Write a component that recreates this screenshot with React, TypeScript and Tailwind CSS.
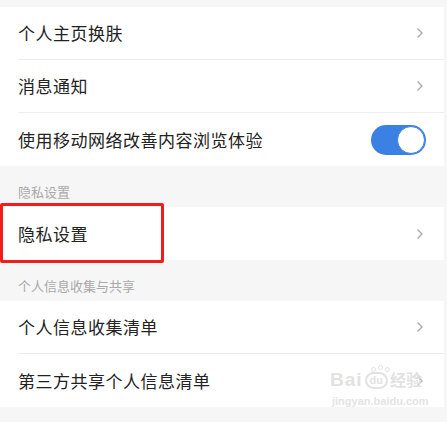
import React, { useState } from 'react';

const font = { fontFamily: '"Noto Sans CJK SC", "Noto Sans", sans-serif' };

function Chevron() {
  return (
    <svg width="8" height="12" viewBox="0 0 8 12" className="shrink-0">
      <path d="M1.5 1.5 L6 6 L1.5 10.5" fill="none" stroke="#a8a8a8" strokeWidth="1.3" />
    </svg>
  );
}

function Row({ label, divider = true, right }: { label: string; divider?: boolean; right?: React.ReactNode }) {
  return (
    <div className="pl-[18px]">
      <div className={`flex items-center justify-between h-[53px] pr-[20px] ${divider ? 'border-b border-[#eeeeee]' : ''}`}>
        <span className="text-[17px] text-[#222222] tracking-[0.5px]">{label}</span>
        {right ?? <Chevron />}
      </div>
    </div>
  );
}

function Toggle() {
  const [on, setOn] = useState(true);
  return (
    <button
      onClick={() => setOn(!on)}
      className={`relative w-[55px] h-[30px] rounded-full mr-[-2px] ${on ? 'bg-[#3b80e3]' : 'bg-[#dddddd]'}`}
    >
      <span
        className={`absolute top-[1px] w-[28px] h-[28px] rounded-full bg-white border border-[#3b80e3] ${on ? 'right-[1px]' : 'left-[1px]'}`}
      />
    </button>
  );
}

function SectionHeader({ title }: { title: string }) {
  return (
    <div className="h-[41px] pl-[18px] flex items-end pb-[6px]">
      <span className="text-[13px] text-[#a9a9a9]">{title}</span>
    </div>
  );
}

export default function App() {
  return (
    <div className="w-[447px] h-[422px] bg-[#f6f6f6] pt-[7px] pr-[3px] relative overflow-hidden" style={font}>
      <div className="bg-white">
        <Row label="个人主页换肤" />
        <Row label="消息通知" />
        <Row label="使用移动网络改善内容浏览体验" divider={false} right={<Toggle />} />
      </div>

      <SectionHeader title="隐私设置" />
      <div className="bg-white">
        <Row label="隐私设置" divider={false} />
      </div>

      <SectionHeader title="个人信息收集与共享" />
      <div className="bg-white">
        <Row label="个人信息收集清单" />
        <Row label="第三方共享个人信息清单" divider={false} />
      </div>

      {/* annotation box */}
      <div className="absolute left-0 top-[203px] w-[164px] h-[60px] border-[3px] border-[#f21c1c] rounded-[2px]" />

      {/* watermark */}
      <div className="absolute left-[330px] top-[370px] flex flex-col items-start pointer-events-none">
        <div className="flex items-end gap-[2px] text-[#e2e2e2] font-bold leading-none" style={{ fontFamily: '"Liberation Sans", "Noto Sans CJK SC", sans-serif' }}>
          <span className="text-[19px] tracking-[1px]">Bai</span>
          <span className="relative text-[11px] px-[3px] py-[1px] rounded-full border-2 border-[#e2e2e2]">
            du
            <span className="absolute left-[4px] top-[-7px] w-[5px] h-[5px] rounded-full border border-[#e2e2e2]" />
            <span className="absolute left-[11px] top-[-9px] w-[5px] h-[5px] rounded-full border border-[#e2e2e2]" />
            <span className="absolute left-[18px] top-[-7px] w-[5px] h-[5px] rounded-full border border-[#e2e2e2]" />
          </span>
          <span className="text-[16px]">经验</span>
        </div>
        <span className="text-[11px] text-[#e4e4e4] font-bold mt-[4px] ml-[2px]" style={{ fontFamily: '"Liberation Sans", sans-serif' }}>
          jingyan.baidu.com
        </span>
      </div>
    </div>
  );
}
